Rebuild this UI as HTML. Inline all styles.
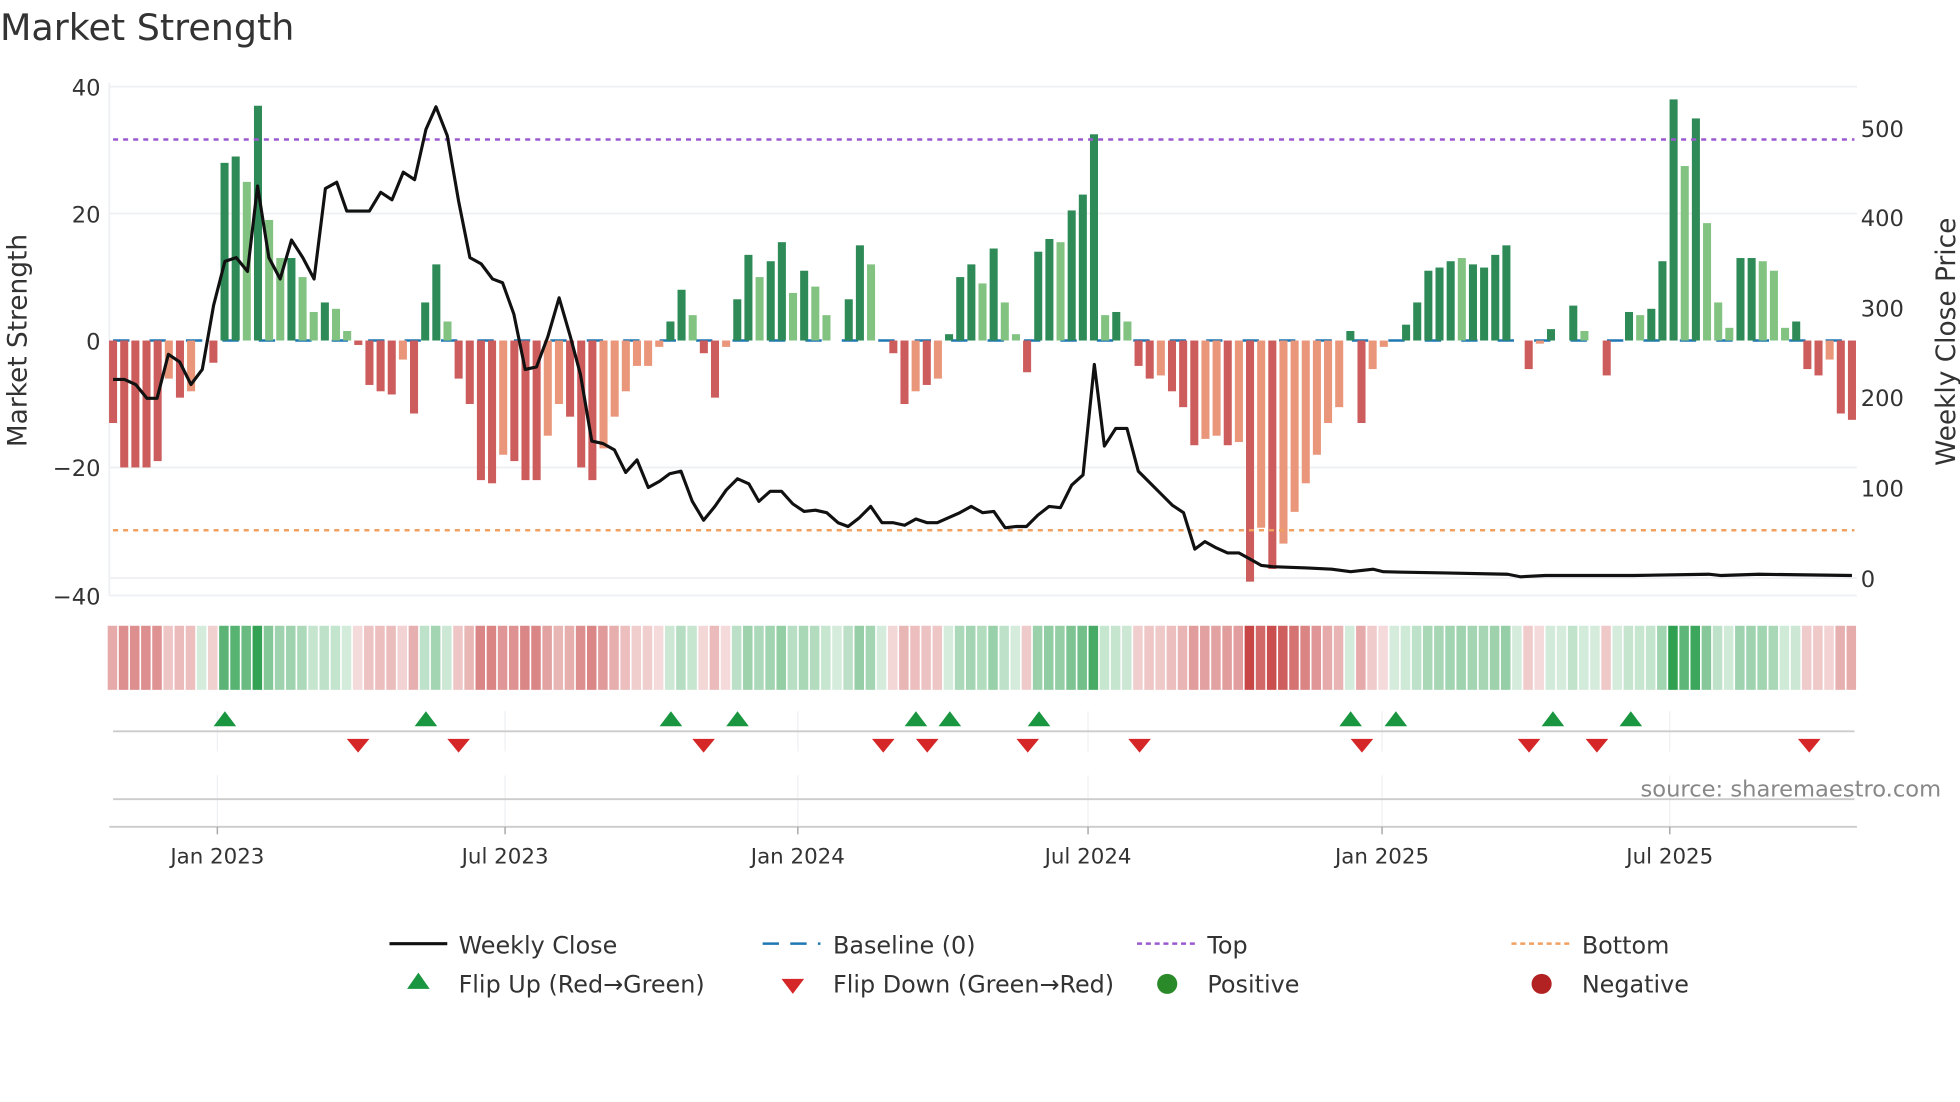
<!DOCTYPE html>
<html><head><meta charset="utf-8"><style>
html,body{margin:0;padding:0;background:#fff;}
svg{display:block;font-family:"DejaVu Sans","Liberation Sans",sans-serif;}
</style></head><body>
<svg id="s" width="1960" height="1102" viewBox="0 0 1560 877" preserveAspectRatio="none" xmlns="http://www.w3.org/2000/svg">
<rect width="1560" height="877" fill="#fff"/>
<text x="0" y="32" font-size="29" fill="#333">Market Strength</text>
<g stroke="#eef0f3" stroke-width="1.5">
<line x1="87" y1="69" x2="1478" y2="69"/><line x1="87" y1="170" x2="1478" y2="170"/>
<line x1="87" y1="372" x2="1478" y2="372"/><line x1="87" y1="474" x2="1478" y2="474"/>
<line x1="87" y1="460" x2="1478" y2="460"/>
<line x1="87" y1="66" x2="87" y2="474"/>
</g>
<g font-size="18" fill="#333">
<text x="80" y="76" text-anchor="end">40</text><text x="80" y="177" text-anchor="end">20</text>
<text x="80" y="278" text-anchor="end">0</text><text x="80" y="379" text-anchor="end">−20</text>
<text x="80" y="481" text-anchor="end">−40</text>
<text x="1481" y="109">500</text><text x="1481" y="180">400</text><text x="1481" y="252">300</text>
<text x="1481" y="323">200</text><text x="1481" y="395">100</text><text x="1481" y="467">0</text>
</g>
<text transform="translate(21,271) rotate(-90)" font-size="21" fill="#333" text-anchor="middle">Market Strength</text>
<text transform="translate(1556,272) rotate(-90)" font-size="21" fill="#333" text-anchor="middle">Weekly Close Price</text>
<line x1="90" y1="271" x2="1476" y2="271" stroke="#1f77b4" stroke-width="2" stroke-dasharray="13,16"/>
<g id="bars"></g>
<line x1="90" y1="111" x2="1476" y2="111" stroke="#9b59d0" stroke-width="2" stroke-dasharray="4,4"/>
<line x1="90" y1="422" x2="1476" y2="422" stroke="#f0a060" stroke-width="2" stroke-dasharray="4,4"/>
<polyline id="price" fill="none" stroke="#111" stroke-width="2.5" stroke-linejoin="round"/>
<g id="heat"></g>
<g stroke="#eef0f3" stroke-width="1" id="vg"></g>
<line x1="90" y1="582" x2="1476" y2="582" stroke="#ccc" stroke-width="1.5"/>
<line x1="90" y1="636" x2="1476" y2="636" stroke="#ccc" stroke-width="1.5"/>
<line x1="87" y1="658" x2="1478" y2="658" stroke="#ccc" stroke-width="1.5"/>
<g id="flips"></g>
<text x="1545" y="634" font-size="18" fill="#888" text-anchor="end">source: sharemaestro.com</text>
<g id="ticks" font-size="17" fill="#333" text-anchor="middle"></g>
<g font-size="19" fill="#333">
<line x1="310" y1="751" x2="356" y2="751" stroke="#111" stroke-width="2.5"/><text x="365" y="759">Weekly Close</text>
<line x1="607" y1="751" x2="653" y2="751" stroke="#1f77b4" stroke-width="2" stroke-dasharray="13,9"/><text x="663" y="759">Baseline (0)</text>
<line x1="905" y1="751" x2="951" y2="751" stroke="#9b59d0" stroke-width="2" stroke-dasharray="4,3"/><text x="961" y="759">Top</text>
<line x1="1203" y1="751" x2="1249" y2="751" stroke="#f0a060" stroke-width="2" stroke-dasharray="4,3"/><text x="1259" y="759">Bottom</text>
<polygon points="333,774 324,787 342,787" fill="#1a9641"/><text x="365" y="790">Flip Up (Red→Green)</text>
<polygon points="622,779 640,779 631,791" fill="#d62728"/><text x="663" y="790">Flip Down (Green→Red)</text>
<circle cx="929" cy="783" r="8" fill="#2a8a2a"/><text x="961" y="790">Positive</text>
<circle cx="1227" cy="783" r="8" fill="#b22222"/><text x="1259" y="790">Negative</text>
</g>
</svg>
<script>
var NS="http://www.w3.org/2000/svg";
function el(t,a,p){var e=document.createElementNS(NS,t);for(var k in a)e.setAttribute(k,a[k]);document.getElementById(p).appendChild(e);return e;}
var v=[[-13,1],[-20,1],[-20,1],[-20,1],[-19,1],[-6,0],[-9,1],[-8,0],[0,1],[-3.5,1],
[28,1],[29,1],[25,0],[37,1],[19,0],[13,0],[13,1],[10,0],[4.5,0],[6,1],[5,0],[1.5,0],[-0.7,1],[-7,1],[-8,1],[-8.5,1],[-3,0],[-11.5,1],[6,1],[12,1],[3,0],
[-6,1],[-10,1],[-22,1],[-22.5,1],[-18,0],[-19,1],[-22,1],[-22,1],[-15,0],[-10,0],[-12,1],[-20,1],[-22,1],[-17,0],[-12,0],[-8,0],[-4,0],[-4,0],[-1,0],
[3,1],[8,1],[4,0],[-2,1],[-9,1],[-1,0],[6.5,1],[13.5,1],[10,0],[12.5,1],[15.5,1],[7.5,0],[11,1],[8.5,0],[4,0],[0,1],[6.5,1],[15,1],[12,0],[0,1],
[-2,1],[-10,1],[-8,0],[-7,1],[-6,0],[1,1],[10,1],[12,1],[9,0],[14.5,1],[6,0],[1,0],[-5,1],[14,1],[16,1],[15.5,0],[20.5,1],[23,1],[32.5,1],[4,0],[4.5,1],[3,0],
[-4,1],[-6,1],[-5.5,0],[-8,1],[-10.5,1],[-16.5,1],[-15.5,0],[-15,0],[-16.5,1],[-16,0],[-38,1],[-29.5,0],[-36,1],[-32,0],[-27,0],[-22.5,0],[-18,0],[-13,0],[-10.5,0],
[1.5,1],[-13,1],[-4.5,0],[-1,0],[0,1],[2.5,1],[6,1],[11,1],[11.5,1],[12.5,1],[13,0],[12,1],[11.5,1],[13.5,1],[15,1],[0,1],[-4.5,1],[-0.5,0],[1.8,1],[0,1],[5.5,1],[1.5,0],[0,1],[-5.5,1],[0,1],
[4.5,1],[4,0],[5,1],[12.5,1],[38,1],[27.5,0],[35,1],[18.5,0],[6,0],[2,0],[13,1],[13,1],[12.5,0],[11,0],[2,0],[3,1],[-4.5,1],[-5.5,1],[-3,0],[-11.5,1],[-12.5,1]];
var n=v.length,step=(1474-90)/(n-1),Z=271,K=5.05;
for(var i=0;i<n;i++){var x=90+i*step,val=v[i][0],d=v[i][1];
 if(val!==0){var c=val>0?(d?"#2e8b57":"#82c382"):(d?"#cd5c5c":"#e9967a");
 var h=Math.abs(val)*K;el("rect",{x:x-3.2,y:val>0?Z-h:Z,width:6.4,height:h,fill:c},"bars");}
 var a=0.18+Math.min(Math.abs(val),38)/38*0.82;
 var col=val>=0?"rgba(46,160,80,"+a+")":"rgba(200,70,70,"+a+")";
 if(Math.abs(val)<0.8)col=val>=0?"rgba(46,160,80,0.2)":"rgba(200,70,70,0.2)";
 el("rect",{x:x-4.3,y:498,width:step-1.3,height:51,fill:col},"heat");}
var p=[[90,302],[99,302],[108,306],[117,317],[125,317],[134,282],[143,288],[152,306],[161,294],[170,243],[179,208],[188,205],[197,216],[205,148],[214,205],[223,222],[232,191],[241,205],[250,222],[259,150],[268,145],[276,168],[285,168],[294,168],[303,153],[312,159],[321,137],[330,143],[339,103],[347,85],[356,108],[365,160],[374,205],[383,210],[392,222],[400,225],[409,250],[418,294],[427,292],[436,268],[445,237],[454,268],[462,298],[471,351],[480,353],[489,358],[498,376],[507,366],[516,388],[525,383],[533,377],[542,375],[551,399],[560,414],[569,403],[578,390],[587,381],[596,385],[604,399],[613,391],[622,391],[631,401],[640,407],[649,406],[658,408],[667,416],[675,419],[684,412],[693,403],[702,416],[711,416],[720,418],[729,413],[738,416],[746,416],[755,412],[764,408],[773,403],[782,408],[791,407],[800,420],[809,419],[817,419],[826,410],[835,403],[844,404],[853,386],[862,378],[871,290],[879,355],[888,341],[897,341],[906,375],[915,384],[924,393],[933,402],[942,408],[951,437],[959,431],[968,436],[977,440],[986,440],[995,445],[1004,450],[1013,451],[1040,452],[1060,453],[1075,455],[1093,453],[1101,455],[1150,456],[1200,457],[1210,459],[1230,458],[1300,458],[1360,457],[1370,458],[1400,457],[1474,458]];
document.getElementById("price").setAttribute("points",p.map(function(q){return q.join(",")}).join(" "));
var dts=[[173,"Jan 2023"],[402,"Jul 2023"],[635,"Jan 2024"],[866,"Jul 2024"],[1100,"Jan 2025"],[1329,"Jul 2025"]];
dts.forEach(function(d){el("line",{x1:d[0],y1:566,x2:d[0],y2:598},"vg");el("line",{x1:d[0],y1:617,x2:d[0],y2:658},"vg");
 el("line",{x1:d[0],y1:658,x2:d[0],y2:664,stroke:"#aaa","stroke-width":1.2},"ticks");
 var t=el("text",{x:d[0],y:687},"ticks");t.textContent=d[1];});
[179,339,534,587,729,756,827,1075,1111,1236,1298].forEach(function(x){el("polygon",{points:(x)+",566 "+(x-9)+",578 "+(x+9)+",578",fill:"#1a9641"},"flips");});
[285,365,560,703,738,818,907,1084,1217,1271,1440].forEach(function(x){el("polygon",{points:(x-9)+",588 "+(x+9)+",588 "+x+",599",fill:"#d62728"},"flips");});
</script>
</body></html>
